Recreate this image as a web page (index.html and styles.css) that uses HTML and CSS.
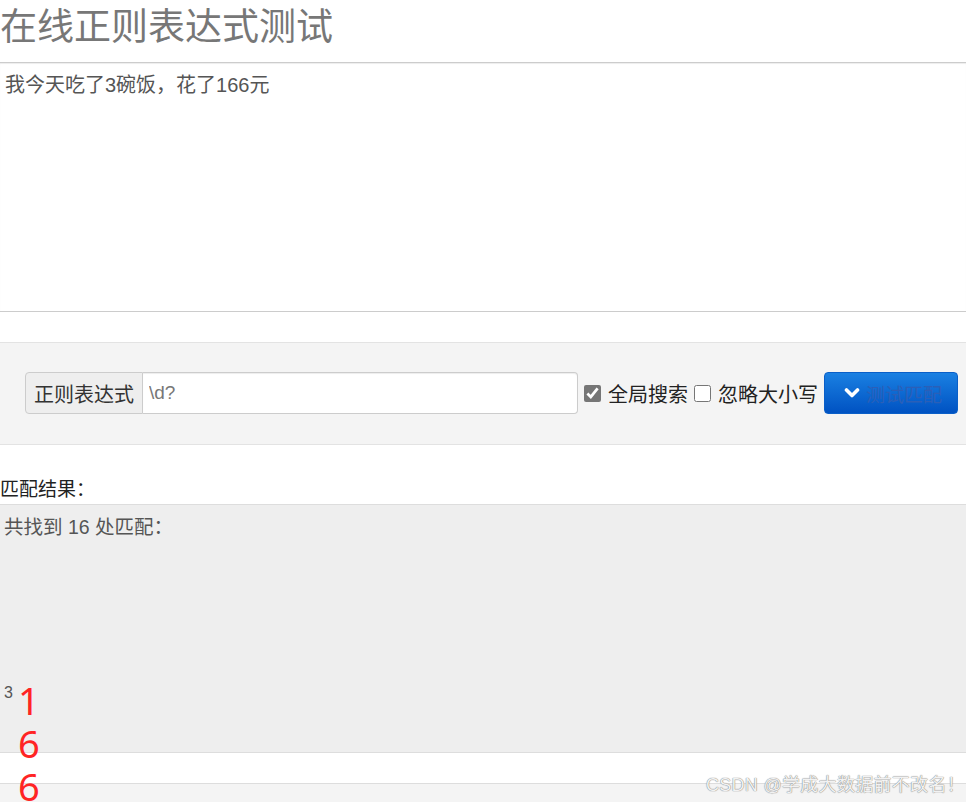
FILE: index.html
```html
<!DOCTYPE html>
<html>
<head>
    <meta charset="utf-8">
    <title>在线正则表达式测试</title>
    <link rel="stylesheet" href="styles.css">
</head>
<body>
    <h1 class="title">在线正则表达式测试</h1>
    <textarea class="source" id="source">我今天吃了3碗饭，花了166元</textarea>

    <div class="panel">
        <div class="toolbar">
            <div class="input-group">
                <span class="addon">正则表达式</span>
                <input class="regex" id="regex" type="text" value="\d?">
            </div>
            <label class="check"><input type="checkbox" checked> 全局搜索</label>
            <label class="check"><input type="checkbox"> 忽略大小写</label>
            <button class="btn-test" id="testBtn">
                <svg class="chevron" width="16" height="12" viewBox="0 0 16 12">
                    <polyline points="2.5,3 8,8.5 13.5,3" fill="none" stroke="#fff" stroke-width="3.6" stroke-linecap="round" stroke-linejoin="round"/>
                </svg>
                测试匹配
            </button>
        </div>
    </div>

    <p class="result-label">匹配结果：</p>
    <div class="result" id="result">
        <p class="summary">共找到 16 处匹配：</p>
        <div class="match">
            <span class="small">3</span>
            <div class="digits">
                <span>1</span>
                <span>6</span>
                <span>6</span>
            </div>
        </div>
    </div>

    <div class="panel panel-bottom"></div>

    <div class="watermark">CSDN @学成大数据前不改名！</div>
</body>
</html>
```

FILE: styles.css
```css
body {
    margin: 0;
    font-family: "Liberation Sans", "Noto Sans CJK SC", sans-serif;
    background-color: #fff;
    color: #333;
    overflow: hidden;
    height: 802px;
    position: relative;
}

.title {
    margin: 0 0 6px;
    font-size: 37px;
    font-weight: normal;
    line-height: 56px;
    color: #777;
    white-space: nowrap;
}

.source {
    display: block;
    width: 100%;
    height: 250px;
    box-sizing: border-box;
    margin: 0;
    padding: 10px 5px;
    border: none;
    border-top: 1px solid #ccc;
    border-bottom: 1px solid #ccc;
    box-shadow: inset 0 1px 1px rgba(0, 0, 0, 0.075);
    font-family: "Liberation Sans", "Noto Sans CJK SC", sans-serif;
    font-size: 20px;
    line-height: 24px;
    color: #555;
    resize: none;
    outline: none;
}

.panel {
    margin-top: 30px;
    background-color: #f4f4f4;
    border-top: 1px solid #e3e3e3;
    border-bottom: 1px solid #e3e3e3;
    padding: 29px 8px 30px 25px;
}

.toolbar {
    display: flex;
    align-items: center;
    height: 42px;
}

.input-group {
    display: flex;
    width: 553px;
    height: 42px;
}

.addon {
    display: flex;
    align-items: center;
    padding: 0 8px;
    background-color: #eee;
    border: 1px solid #ccc;
    border-radius: 4px 0 0 4px;
    font-size: 20px;
    color: #333;
    white-space: nowrap;
}

.regex {
    flex: 1;
    min-width: 0;
    margin: 0;
    padding: 0 6px;
    border: 1px solid #ccc;
    border-left: none;
    border-radius: 0 4px 4px 0;
    box-shadow: inset 0 1px 1px rgba(0, 0, 0, 0.075);
    font-family: "Liberation Sans", "Noto Sans CJK SC", sans-serif;
    font-size: 19px;
    color: #777;
    outline: none;
}

.check {
    display: flex;
    align-items: center;
    margin-left: 6px;
    font-size: 20px;
    color: #222;
    white-space: nowrap;
}

.check input {
    width: 17px;
    height: 17px;
    margin: 0 7px 0 0;
    accent-color: #767676;
}

.btn-test {
    display: flex;
    align-items: center;
    margin-left: 6px;
    width: 134px;
    height: 42px;
    padding: 0 0 0 19px;
    border: 1px solid #0a5fc8;
    border-radius: 4px;
    background: linear-gradient(to bottom, #1a80e2, #0052c2);
    font-family: "Liberation Sans", "Noto Sans CJK SC", sans-serif;
    font-size: 19px;
    color: #2a5fb8;
    cursor: pointer;
}

.chevron {
    margin-right: 6px;
}

.result-label {
    margin: 30px 0 0;
    line-height: 29px;
    font-size: 19px;
    color: #222;
}

.result {
    height: 249px;
    box-sizing: border-box;
    padding: 10px 4px;
    background-color: #eee;
    border-top: 1px solid #ddd;
    border-bottom: 1px solid #ddd;
}

.summary {
    margin: 0;
    font-size: 19.5px;
    line-height: 24px;
    color: #555;
}

.match {
    display: flex;
    align-items: flex-start;
    margin-top: 140px;
}

.small {
    margin-top: 4px;
    font-size: 16px;
    line-height: 20px;
    color: #555;
}

.digits {
    display: flex;
    flex-direction: column;
    margin-left: 5px;
    font-family: "Noto Sans", sans-serif;
    font-size: 38px;
    line-height: 43px;
    color: #ff2424;
}

.panel-bottom {
    height: 40px;
    padding: 0;
    border-top-color: #ddd;
}

.watermark {
    position: absolute;
    right: 1px;
    bottom: 7px;
    font-size: 18px;
    line-height: 20px;
    letter-spacing: 0.3px;
    color: #f2f2f2;
    text-shadow: 0 0 1px #777, 0 0 1px #999;
    white-space: nowrap;
}
```
